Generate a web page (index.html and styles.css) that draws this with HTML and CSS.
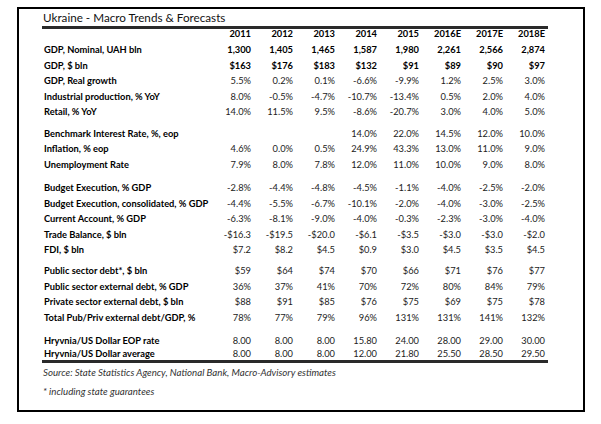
FILE: index.html
```html
<!DOCTYPE html>
<html>
<head>
<meta charset="utf-8">
<link rel="stylesheet" href="styles.css">
</head>
<body>
<div class="frame">
  <div class="sheet">
    <div class="title">Ukraine - Macro Trends &amp; Forecasts</div>
    <div class="row head strong"><span class="lbl"></span><span>2011</span><span>2012</span><span>2013</span><span>2014</span><span>2015</span><span>2016E</span><span>2017E</span><span>2018E</span></div>
    <div class="row strong"><span class="lbl">GDP, Nominal, UAH bln</span><span>1,300</span><span>1,405</span><span>1,465</span><span>1,587</span><span>1,980</span><span>2,261</span><span>2,566</span><span>2,874</span></div>
    <div class="row strong"><span class="lbl">GDP, $ bln</span><span>$163</span><span>$176</span><span>$183</span><span>$132</span><span>$91</span><span>$89</span><span>$90</span><span>$97</span></div>
    <div class="row"><span class="lbl">GDP, Real growth</span><span>5.5%</span><span>0.2%</span><span>0.1%</span><span>-6.6%</span><span>-9.9%</span><span>1.2%</span><span>2.5%</span><span>3.0%</span></div>
    <div class="row"><span class="lbl">Industrial production, % YoY</span><span>8.0%</span><span>-0.5%</span><span>-4.7%</span><span>-10.7%</span><span>-13.4%</span><span>0.5%</span><span>2.0%</span><span>4.0%</span></div>
    <div class="row"><span class="lbl">Retail, % YoY</span><span>14.0%</span><span>11.5%</span><span>9.5%</span><span>-8.6%</span><span>-20.7%</span><span>3.0%</span><span>4.0%</span><span>5.0%</span></div>

    <div class="row g1"><span class="lbl">Benchmark Interest Rate, %, eop</span><span></span><span></span><span></span><span>14.0%</span><span>22.0%</span><span>14.5%</span><span>12.0%</span><span>10.0%</span></div>
    <div class="row"><span class="lbl">Inflation, % eop</span><span>4.6%</span><span>0.0%</span><span>0.5%</span><span>24.9%</span><span>43.3%</span><span>13.0%</span><span>11.0%</span><span>9.0%</span></div>
    <div class="row"><span class="lbl">Unemployment Rate</span><span>7.9%</span><span>8.0%</span><span>7.8%</span><span>12.0%</span><span>11.0%</span><span>10.0%</span><span>9.0%</span><span>8.0%</span></div>

    <div class="row g2"><span class="lbl">Budget Execution, % GDP</span><span>-2.8%</span><span>-4.4%</span><span>-4.8%</span><span>-4.5%</span><span>-1.1%</span><span>-4.0%</span><span>-2.5%</span><span>-2.0%</span></div>
    <div class="row"><span class="lbl">Budget Execution, consolidated, % GDP</span><span>-4.4%</span><span>-5.5%</span><span>-6.7%</span><span>-10.1%</span><span>-2.0%</span><span>-4.0%</span><span>-3.0%</span><span>-2.5%</span></div>
    <div class="row"><span class="lbl">Current Account, % GDP</span><span>-6.3%</span><span>-8.1%</span><span>-9.0%</span><span>-4.0%</span><span>-0.3%</span><span>-2.3%</span><span>-3.0%</span><span>-4.0%</span></div>
    <div class="row"><span class="lbl">Trade Balance, $ bln</span><span>-$16.3</span><span>-$19.5</span><span>-$20.0</span><span>-$6.1</span><span>-$3.5</span><span>-$3.0</span><span>-$3.0</span><span>-$2.0</span></div>
    <div class="row"><span class="lbl">FDI, $ bln</span><span>$7.2</span><span>$8.2</span><span>$4.5</span><span>$0.9</span><span>$3.0</span><span>$4.5</span><span>$3.5</span><span>$4.5</span></div>

    <div class="row g3"><span class="lbl">Public sector debt*, $ bln</span><span>$59</span><span>$64</span><span>$74</span><span>$70</span><span>$66</span><span>$71</span><span>$76</span><span>$77</span></div>
    <div class="row"><span class="lbl">Public sector external debt, % GDP</span><span>36%</span><span>37%</span><span>41%</span><span>70%</span><span>72%</span><span>80%</span><span>84%</span><span>79%</span></div>
    <div class="row"><span class="lbl">Private sector external debt, $ bln</span><span>$88</span><span>$91</span><span>$85</span><span>$76</span><span>$75</span><span>$69</span><span>$75</span><span>$78</span></div>
    <div class="row"><span class="lbl">Total Pub/Priv external debt/GDP, %</span><span>78%</span><span>77%</span><span>79%</span><span>96%</span><span>131%</span><span>131%</span><span>141%</span><span>132%</span></div>

    <div class="row g4"><span class="lbl">Hryvnia/US Dollar EOP rate</span><span>8.00</span><span>8.00</span><span>8.00</span><span>15.80</span><span>24.00</span><span>28.00</span><span>29.00</span><span>30.00</span></div>
    <div class="row last"><span class="lbl">Hryvnia/US Dollar average</span><span>8.00</span><span>8.00</span><span>8.00</span><span>12.00</span><span>21.80</span><span>25.50</span><span>28.50</span><span>29.50</span></div>

    <p class="note">Source: State Statistics Agency, National Bank, Macro-Advisory estimates</p>
    <p class="note">* including state guarantees</p>
  </div>
</div>
</body>
</html>
```
FILE: styles.css
```css
html, body {
  margin: 0;
  padding: 0;
  background: #fff;
}

body {
  font-family: Lato, "Liberation Sans", sans-serif;
  color: #000;
}

.frame {
  box-sizing: border-box;
  margin: 7px 0 0 17px;
  width: 568px;
  height: 405px;
  border: 2px solid #000;
  padding-left: 23px;
}

.sheet {
  width: 506px;
}

.title {
  height: 17px;
  line-height: 17px;
  font-size: 11.7px;
  padding-left: 1px;
  color: #111;
  border-bottom: 3px solid #2a2a2a;
}

.row {
  display: grid;
  grid-template-columns: 167px repeat(8, 42px);
  height: 15.5px;
  line-height: 15.5px;
  font-size: 9.3px;
  color: #222;
  white-space: nowrap;
}

.row span {
  text-align: right;
}

.row .lbl {
  text-align: left;
  padding-left: 2px;
  font-weight: 700;
  color: #000;
}

.strong span {
  font-weight: 700;
  color: #000;
}

.head {
  height: 13.25px;
  line-height: 9px;
}

.g1 { margin-top: 5.8px; }
.g2 { margin-top: 8px; }
.g3 { margin-top: 5.7px; }
.g4 { margin-top: 8px; }

.last {
  height: 11.5px;
  line-height: 9px;
  border-bottom: 3px solid #2a2a2a;
}

.note {
  margin: 0;
  padding-left: 1px;
  height: 19px;
  line-height: 18px;
  font-size: 9.7px;
  font-style: italic;
  color: #333;
}
```
